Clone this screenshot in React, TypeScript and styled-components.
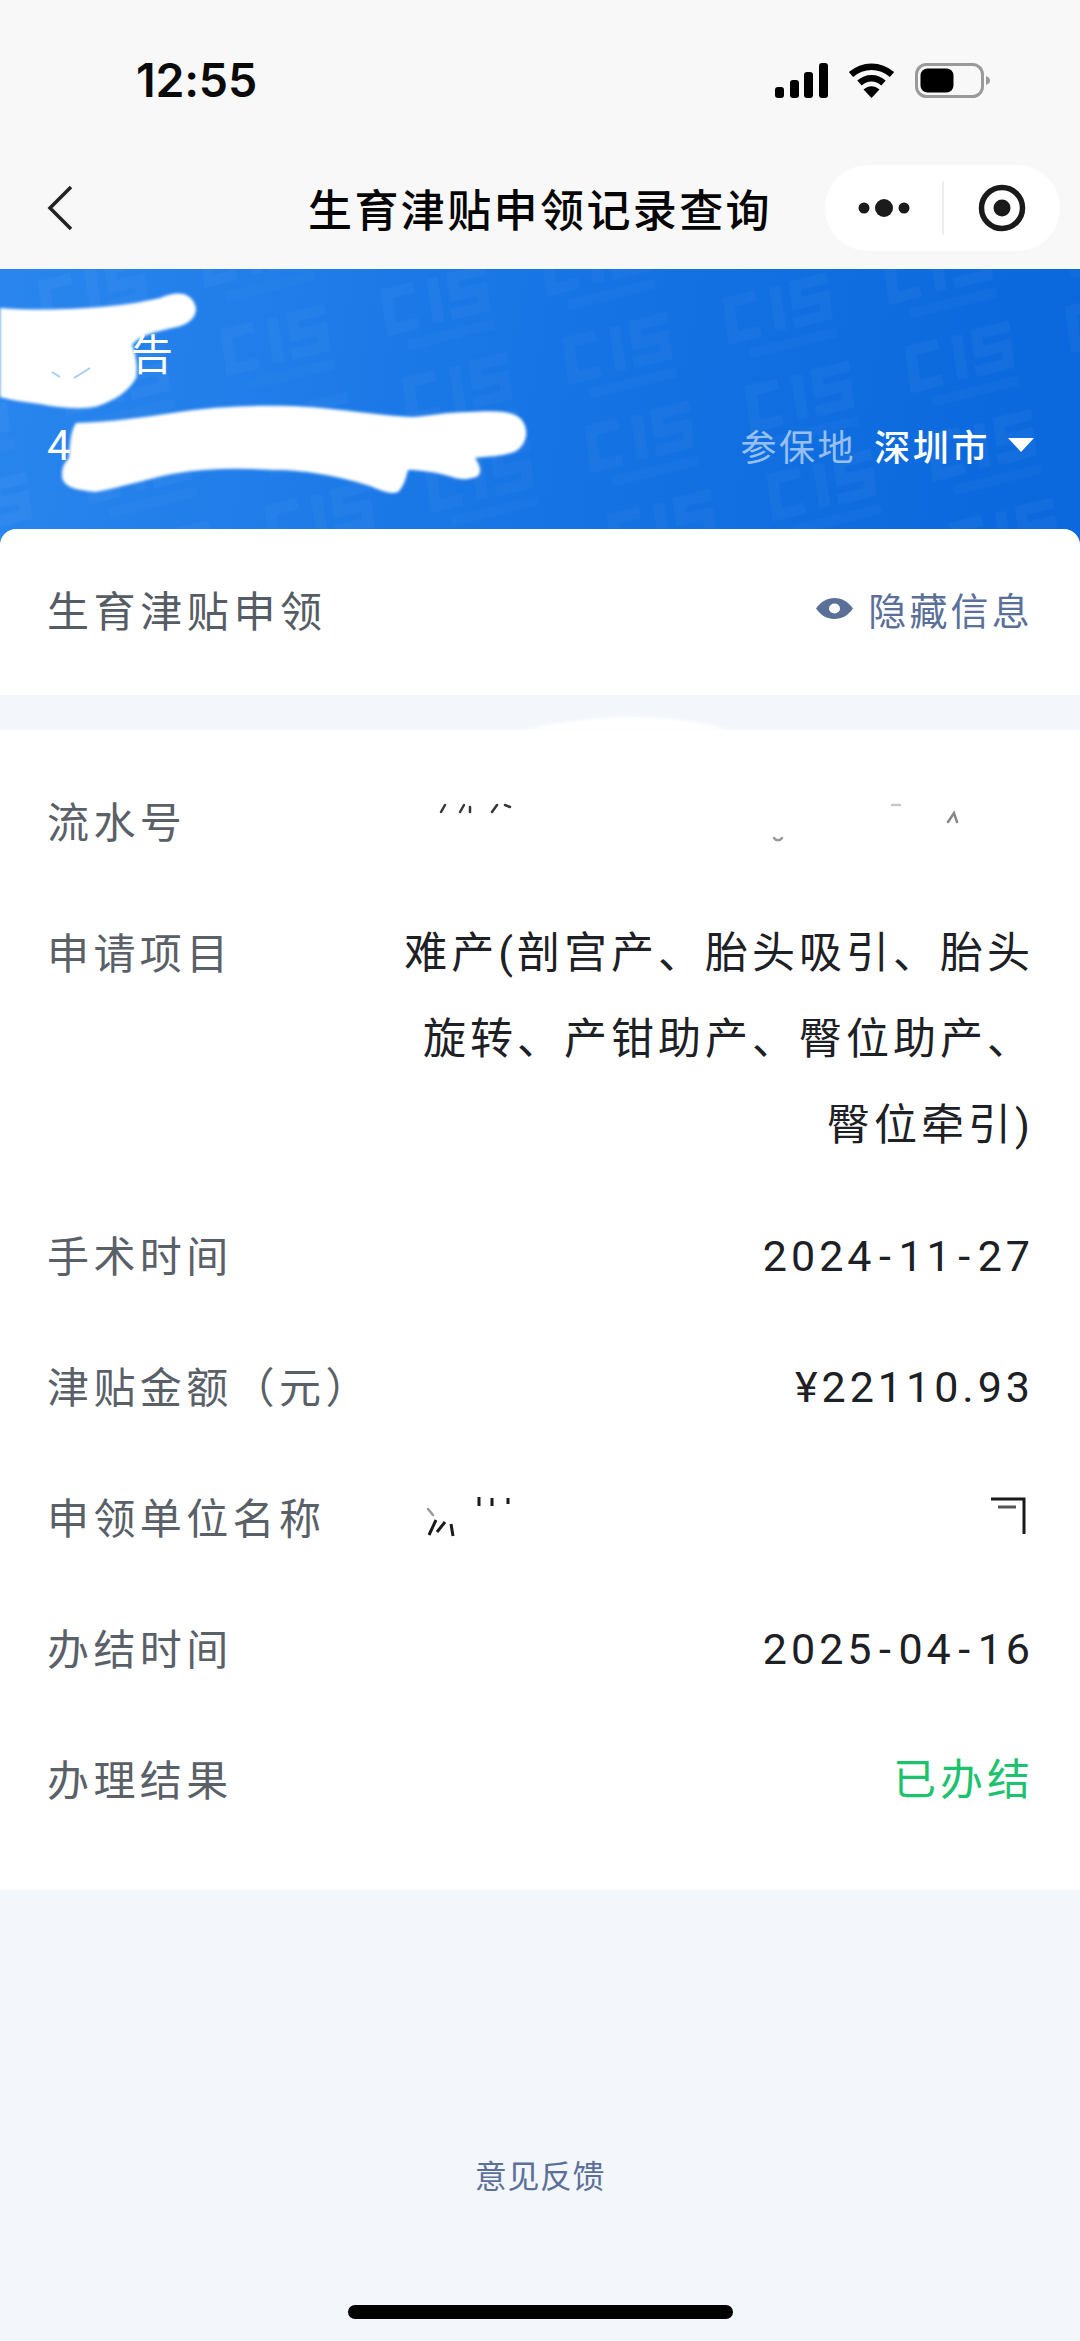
import React from "react";
import styled, { createGlobalStyle } from "styled-components";

const Global = createGlobalStyle`
  html, body { margin: 0; padding: 0; background: #f3f7fb; }
  body { font-family: "Noto Sans CJK SC", "Noto Sans", sans-serif; }
  * { box-sizing: border-box; }
`;

const Page = styled.div`
  position: relative;
  width: 1080px;
  height: 2341px;
  overflow: hidden;
  display: flex;
  flex-direction: column;
  background: #f3f7fb;
`;

const StatusBar = styled.div`
  height: 160px;
  background: #f8f8f8;
  display: flex;
  align-items: center;
  justify-content: space-between;
  padding: 0 90px 0 136px;
`;

const Time = styled.span`
  font-family: Inter, sans-serif;
  font-weight: 600;
  font-size: 46.5px;
  letter-spacing: -0.2px;
  color: #0a0a0a;
`;

const StatusIcons = styled.div`
  display: flex;
  align-items: center;
  gap: 20px;
`;

const NavBar = styled.div`
  height: 109px;
  background: #f8f8f8;
  display: grid;
  grid-template-columns: 1fr auto 1fr;
  align-items: center;
  padding: 0 20px 13px 20px;
`;

const BackIcon = styled.svg`
  display: block;
  width: 26px;
  height: 46px;
  margin-left: 27px;
`;

const Title = styled.div`
  font-size: 44px;
  font-weight: 500;
  letter-spacing: 2.4px;
  line-height: 60px;
  color: #050505;
`;

const Capsule = styled.div`
  justify-self: end;
  width: 235px;
  height: 86px;
  border-radius: 43px;
  background: #fff;
  display: flex;
  align-items: center;
`;

const CapsuleSide = styled.div`
  flex: 1;
  height: 100%;
  display: flex;
  align-items: center;
  justify-content: center;
`;

const CapsuleDivider = styled.div`
  width: 2px;
  height: 54px;
  background: #eeeeee;
`;

const Banner = styled.div`
  position: relative;
  height: 274px;
  overflow: hidden;
  background: linear-gradient(100deg, #2a86ee 0%, #1674e4 50%, #0a67dc 100%);
  display: flex;
  justify-content: space-between;
  padding: 53px 46px 0 47px;
  color: #fff;
`;

const Watermark = styled.svg`
  position: absolute;
  inset: 0;
  width: 100%;
  height: 100%;
`;

const Identity = styled.div`
  position: relative;
  display: flex;
  flex-direction: column;
`;

const Name = styled.div`
  font-size: 42px;
  line-height: 60px;
  padding-left: 84px;
`;

const IdNumber = styled.div`
  font-family: Roboto, sans-serif;
  font-size: 42px;
  line-height: 50px;
  margin-top: 39px;
`;

const Region = styled.div`
  position: relative;
  align-self: flex-start;
  margin-top: 98px;
  display: flex;
  align-items: center;
  font-size: 36px;
  line-height: 50px;
  letter-spacing: 2.6px;
`;

const RegionLabel = styled.span`
  color: rgba(255, 255, 255, 0.58);
  margin-right: 18px;
`;

const RegionName = styled.span`
  font-weight: 500;
  margin-right: 18px;
`;

const Caret = styled.span`
  width: 0;
  height: 0;
  border-left: 13px solid transparent;
  border-right: 13px solid transparent;
  border-top: 14px solid #fff;
`;

const HeadCard = styled.div`
  position: relative;
  margin-top: -14px;
  height: 166px;
  background: #fff;
  border-radius: 16px 16px 0 0;
  display: flex;
  align-items: center;
  justify-content: space-between;
  padding: 0 47px 7px;
`;

const HeadTitle = styled.div`
  font-size: 42px;
  letter-spacing: 4.6px;
  color: #565c64;
`;

const ToggleInfo = styled.div`
  display: flex;
  align-items: center;
  gap: 15px;
  font-size: 38px;
  letter-spacing: 3.2px;
  color: #5b7099;
`;

const EyeIcon = styled.svg`
  display: block;
  width: 37px;
  height: 21px;
`;

const DetailCard = styled.div`
  margin-top: 35px;
  height: 1160px;
  background: #fff;
  padding: 47px 47px 0;
  display: flex;
  flex-direction: column;
  gap: 45px;
`;

const Row = styled.div`
  display: flex;
  justify-content: space-between;
  align-items: flex-start;
`;

const Label = styled.div`
  flex: none;
  font-size: 42px;
  line-height: 86px;
  letter-spacing: 4.4px;
  color: #5a6068;
`;

const Value = styled.div<{ $green?: boolean }>`
  width: 640px;
  min-height: 86px;
  text-align: right;
  font-family: Roboto, "Noto Sans CJK SC", sans-serif;
  font-size: 43px;
  line-height: 86px;
  letter-spacing: 4px;
  margin: 2px -1px -2px 0;
  color: ${(p) => (p.$green ? "#1dc26f" : "#1d2024")};
`;

const DateDash = styled.span`
  letter-spacing: 7.5px;
  margin-left: 3.5px;
`;

const Footer = styled.div`
  flex: 1;
  display: flex;
  justify-content: center;
  padding-top: 261px;
`;

const Feedback = styled.div`
  font-size: 32px;
  line-height: 46px;
  letter-spacing: 0.6px;
  color: #5b7099;
`;

const HomeBar = styled.div`
  position: absolute;
  left: 348px;
  bottom: 22px;
  width: 385px;
  height: 14px;
  border-radius: 7px;
  background: #000;
`;

const Scribbles = styled.svg`
  position: absolute;
  inset: 0;
  width: 1080px;
  height: 2341px;
  pointer-events: none;
`;

const Signal = () => (
  <svg width="53" height="35" viewBox="0 0 53 35">
    <rect x="0" y="24" width="9" height="11" rx="3" fill="#000" />
    <rect x="15" y="17" width="9" height="18" rx="3" fill="#000" />
    <rect x="29" y="9" width="9" height="26" rx="3" fill="#000" />
    <rect x="44" y="0" width="9" height="35" rx="3" fill="#000" />
  </svg>
);

const Wifi = () => (
  <svg width="47" height="35" viewBox="0 0 47 35">
    <path d="M3 11.5C15 1 32 1 44 11.5" fill="none" stroke="#000" strokeWidth="6.5" />
    <path d="M11.5 20C18.5 13.5 28.5 13.5 35.5 20" fill="none" stroke="#000" strokeWidth="6.5" />
    <path d="M15.5 26.5C20.5 22 26.5 22 31.5 26.5L23.5 35Z" fill="#000" />
  </svg>
);

const Battery = () => (
  <svg width="75" height="35" viewBox="0 0 75 35">
    <rect x="1.5" y="1.5" width="66" height="32" rx="10" fill="none" stroke="#9a9a9a" strokeWidth="3" />
    <rect x="5.5" y="5.5" width="33" height="24" rx="7" fill="#000" />
    <path d="M71 13C74 14 75 16 75 17.5C75 19 74 21 71 22Z" fill="#9a9a9a" />
  </svg>
);

const rows: { label: string; value?: string; green?: boolean }[] = [
  { label: "流水号" },
  { label: "申请项目", value: "难产(剖宫产、胎头吸引、胎头旋转、产钳助产、臀位助产、臀位牵引)" },
  { label: "手术时间", value: "2024-11-27" },
  { label: "津贴金额（元）", value: "¥22110.93" },
  { label: "申领单位名称" },
  { label: "办结时间", value: "2025-04-16" },
  { label: "办理结果", value: "已办结", green: true },
];

const renderValue = (value?: string) => {
  if (!value || !/^\d{4}-\d{2}-\d{2}$/.test(value)) return value;
  const [y, m, d] = value.split("-");
  return (
    <>
      {y}
      <DateDash>-</DateDash>
      {m}
      <DateDash>-</DateDash>
      {d}
    </>
  );
};

export default function App() {
  return (
    <>
      <Global />
      <Page>
        <StatusBar>
          <Time>12:55</Time>
          <StatusIcons>
            <Signal />
            <Wifi />
            <Battery />
          </StatusIcons>
        </StatusBar>
        <NavBar>
          <BackIcon viewBox="0 0 26 46">
            <path d="M24 2L3 23L24 44" fill="none" stroke="#222" strokeWidth="3.5" />
          </BackIcon>
          <Title>生育津贴申领记录查询</Title>
          <Capsule>
            <CapsuleSide>
              <svg width="60" height="20" viewBox="0 0 60 20">
                <circle cx="11" cy="10" r="5.5" fill="#1a1a1a" />
                <circle cx="31" cy="10" r="9" fill="#1a1a1a" />
                <circle cx="51" cy="10" r="5.5" fill="#1a1a1a" />
              </svg>
            </CapsuleSide>
            <CapsuleDivider />
            <CapsuleSide>
              <svg width="48" height="48" viewBox="0 0 48 48">
                <circle cx="24" cy="24" r="20.5" fill="none" stroke="#1a1a1a" strokeWidth="5.5" />
                <circle cx="24" cy="24" r="8.5" fill="#1a1a1a" />
              </svg>
            </CapsuleSide>
          </Capsule>
        </NavBar>

        <Banner>
          <Watermark>
            <defs>
              <pattern
                id="chsMark"
                width="165"
                height="91"
                patternUnits="userSpaceOnUse"
                patternTransform="translate(20 10) rotate(-14)"
              >
                <g fill="none" stroke="#fff" strokeWidth="11" strokeOpacity="0.032">
                  <path d="M50 12H22L18 48H46" />
                  <path d="M70 8L66 52" />
                  <path d="M124 12H90L88 30H116L114 48H80" />
                </g>
                <g fill="#fff" fillOpacity="0.02">
                  <rect x="30" y="62" width="90" height="10" rx="2" />
                </g>
              </pattern>
            </defs>
            <rect width="100%" height="100%" fill="url(#chsMark)" />
          </Watermark>
          <Identity>
            <Name>告</Name>
            <IdNumber>4</IdNumber>
          </Identity>
          <Region>
            <RegionLabel>参保地</RegionLabel>
            <RegionName>深圳市</RegionName>
            <Caret />
          </Region>
        </Banner>

        <HeadCard>
          <HeadTitle>生育津贴申领</HeadTitle>
          <ToggleInfo>
            <EyeIcon viewBox="0 0 37 21">
              <path
                fillRule="evenodd"
                d="M0 10.5C5 3.5 11 0 18.5 0C26 0 32 3.5 37 10.5C32 17.5 26 21 18.5 21C11 21 5 17.5 0 10.5ZM18.5 5.5A5.5 5 0 1 0 18.5 15.5A5.5 5 0 1 0 18.5 5.5Z"
                fill="#5b7099"
              />
            </EyeIcon>
            隐藏信息
          </ToggleInfo>
        </HeadCard>

        <DetailCard>
          {rows.map((r) => (
            <Row key={r.label}>
              <Label>{r.label}</Label>
              <Value $green={r.green}>{renderValue(r.value)}</Value>
            </Row>
          ))}
        </DetailCard>

        <Footer>
          <Feedback>意见反馈</Feedback>
        </Footer>
        <HomeBar />

        <Scribbles viewBox="0 0 1080 2341">
          <defs>
            <filter id="soft" x="-5%" y="-5%" width="110%" height="110%">
              <feGaussianBlur stdDeviation="1.5" />
            </filter>
          </defs>
          <g filter="url(#soft)">
            <path
              d="M0 308C50 312 120 308 160 298C178 290 192 292 196 308C196 320 185 326 172 328C155 332 140 335 132 345C136 355 138 368 136 378C128 392 115 400 98 406C82 410 60 408 40 404C25 402 10 400 0 397Z"
              fill="#fff"
            />
            <path
              d="M76 423C110 422 140 418 172 413C210 407 250 405 289 406C330 407 380 416 413 417C430 416 445 412 468 412C490 411 510 410 520 418C530 428 528 445 514 452C500 457 488 456 475 458C480 465 482 472 478 476C470 480 460 480 452 477C436 472 420 470 408 470C406 478 404 486 398 492C390 495 380 490 370 486C345 478 310 470 275 470C240 468 205 468 172 474C150 478 120 488 95 492C78 490 62 488 62 475C62 465 66 462 69 458C70 445 70 432 76 423Z"
              fill="#fff"
            />
            <path d="M523 730C560 722 600 717 630 717C670 717 700 722 730 730Z" fill="#fff" />
          </g>
          <path d="M52 372L60 377M74 378L90 368" stroke="#a9ccf4" strokeWidth="2" fill="none" />
          <g stroke="#33373d" strokeWidth="2.5" fill="none" strokeLinecap="round">
            <path d="M441 812L445 805M460 812L464 805M470 807L470 812M492 812L497 805M505 805L510 807" />
            <path d="M774 838C776 841 780 841 782 838" stroke="#9a9a9a" />
            <path d="M892 805L900 805" stroke="#c8c8c8" />
            <path d="M948 822L954 813L957 822" stroke="#888" />
            <path d="M428 1509L433 1515" stroke="#999" />
          </g>
          <g stroke="#1a1a1a" strokeWidth="3" fill="none">
            <path d="M429 1535L436 1520M437 1532L445 1522M451 1524L453 1536" />
            <path d="M479 1497V1506M492 1498V1506M508 1498V1504" />
            <path d="M991 1499H1024V1534" />
            <path d="M998 1507H1016" stroke="#555" />
          </g>
        </Scribbles>
      </Page>
    </>
  );
}
